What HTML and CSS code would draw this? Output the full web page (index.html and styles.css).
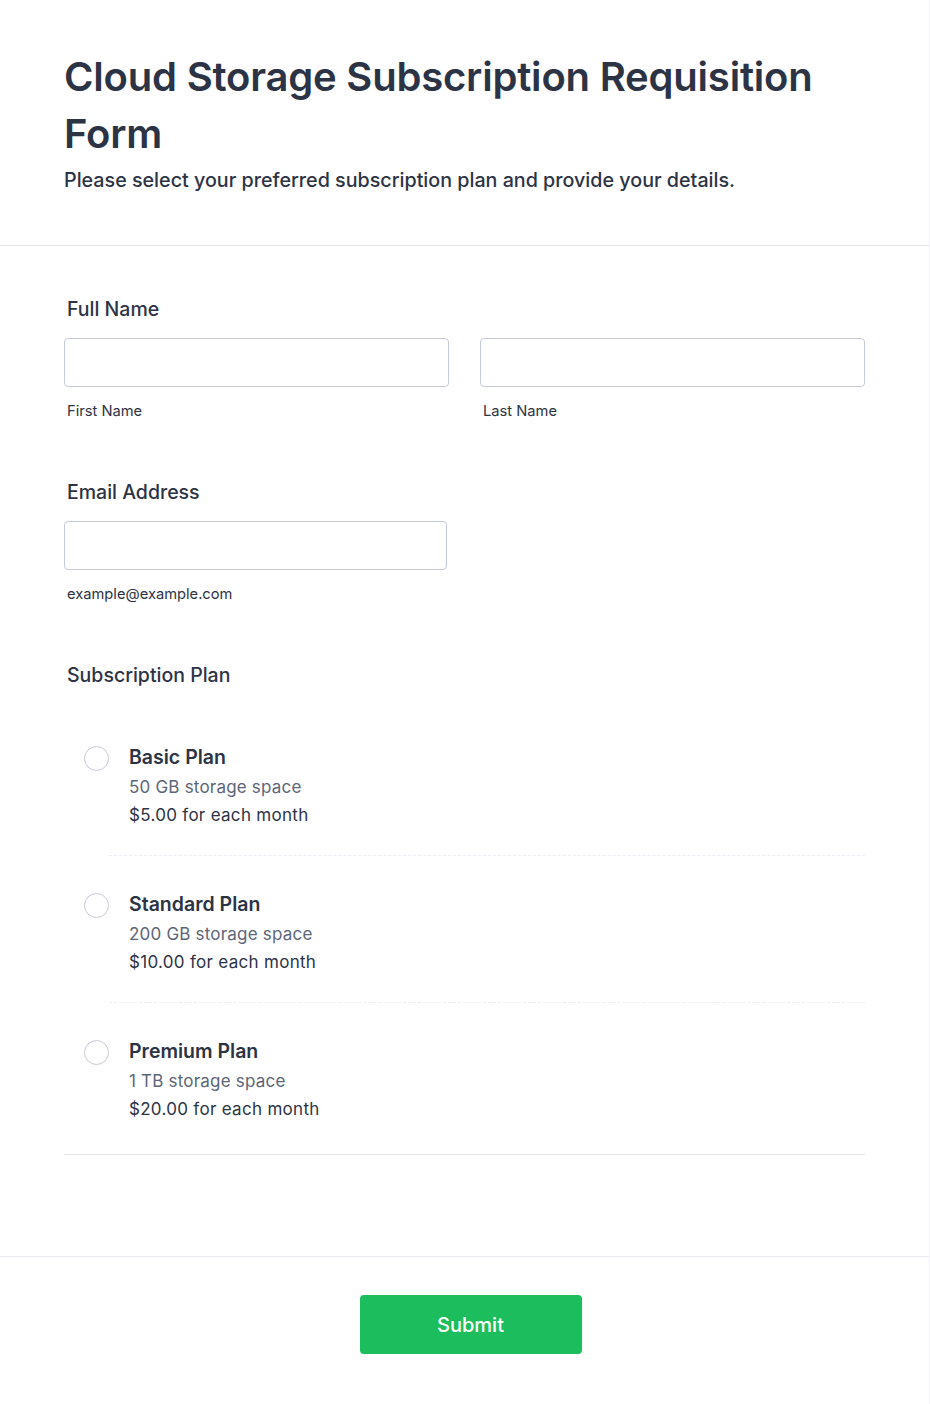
FILE: index.html
```html
<!DOCTYPE html>
<html lang="en">
<head>
<meta charset="utf-8">
<title>Cloud Storage Subscription Requisition Form</title>
<link rel="stylesheet" href="styles.css">
</head>
<body>
<div class="card">
  <header class="header">
    <h1 class="title">Cloud Storage Subscription Requisition Form</h1>
    <p class="subtitle">Please select your preferred subscription plan and provide your details.</p>
  </header>

  <main class="body">
    <section class="field">
      <div class="label">Full Name</div>
      <div class="row">
        <div class="col">
          <div class="input"></div>
          <div class="sublabel">First Name</div>
        </div>
        <div class="col">
          <div class="input"></div>
          <div class="sublabel">Last Name</div>
        </div>
      </div>
    </section>

    <section class="field">
      <div class="label">Email Address</div>
      <div class="col email">
        <div class="input"></div>
        <div class="sublabel">example@example.com</div>
      </div>
    </section>

    <section class="field plans-field">
      <div class="label">Subscription Plan</div>
      <div class="plans">
        <div class="plan">
          <span class="radio"></span>
          <div class="plan-text">
            <div class="plan-name">Basic Plan</div>
            <div class="plan-desc">50 GB storage space</div>
            <div class="plan-price">$5.00 for each month</div>
          </div>
        </div>
        <div class="plan">
          <span class="radio"></span>
          <div class="plan-text">
            <div class="plan-name">Standard Plan</div>
            <div class="plan-desc">200 GB storage space</div>
            <div class="plan-price">$10.00 for each month</div>
          </div>
        </div>
        <div class="plan">
          <span class="radio"></span>
          <div class="plan-text">
            <div class="plan-name">Premium Plan</div>
            <div class="plan-desc">1 TB storage space</div>
            <div class="plan-price">$20.00 for each month</div>
          </div>
        </div>
      </div>
    </section>
  </main>

  <footer class="footer">
    <button class="submit" type="button">Submit</button>
  </footer>
</div>
</body>
</html>
```

FILE: styles.css
```css
* { box-sizing: border-box; }

html, body {
  margin: 0;
  padding: 0;
  background: #ffffff;
}

body {
  font-family: Inter, "Noto Sans", sans-serif;
  color: #2c3345;
}

.card {
  width: 930px;
  min-height: 1404px;
  border-right: 1px solid #f3f3f7;
  background: #fff;
}

.header {
  padding: 48px 64px 53px 64px;
  border-bottom: 1px solid #e3e5ee;
}

.title {
  margin: 0;
  font-size: 40px;
  line-height: 57px;
  font-weight: 600;
  color: #2c3345;
  letter-spacing: -0.2px;
}

.subtitle {
  margin: 6px 0 0 0;
  font-size: 19.7px;
  line-height: 24px;
  font-weight: 500;
  color: #2c3345;
}

.body {
  padding: 51px 64px 0 64px;
}

.field {
  margin-bottom: 60px;
}

.label {
  font-size: 19.5px;
  line-height: 24px;
  font-weight: 500;
  color: #2c3345;
  padding-left: 3px;
  margin-bottom: 17px;
}

.row {
  display: flex;
  gap: 31px;
}

.col {
  flex: 1;
}

.email {
  width: 383px;
  flex: none;
}

.input {
  height: 49px;
  border: 1px solid #c3cad8;
  border-radius: 4px;
  background: #fff;
}

.sublabel {
  margin-top: 15px;
  padding-left: 3px;
  font-size: 14.7px;
  line-height: 18px;
  color: #2c3345;
}

.plans-field {
  margin-bottom: 0;
}

.plans-field .label {
  margin-bottom: 58px;
}

.plans {
  border-bottom: 1px solid #e3e5ee;
  padding-bottom: 34px;
}

.plan {
  display: flex;
  align-items: flex-start;
  padding-left: 20px;
}

.radio {
  width: 25px;
  height: 25px;
  border: 1.5px solid #c7cbd8;
  border-radius: 50%;
  flex: none;
  margin-top: 1px;
}

.plan-text {
  flex: 1;
  padding-left: 20px;
}

.plan:not(:last-child) .plan-text {
  padding-bottom: 29px;
  border-bottom: 1px dashed #eceef3;
  margin-bottom: 36px;
}

.plan-name {
  font-size: 19.5px;
  line-height: 24px;
  font-weight: 600;
  color: #2c3345;
}

.plan-desc {
  margin-top: 7px;
  font-size: 17px;
  line-height: 22px;
  color: #5c6678;
  letter-spacing: 0.2px;
}

.plan-price {
  margin-top: 6px;
  font-size: 17px;
  line-height: 22px;
  color: #2c3345;
  letter-spacing: 0.3px;
}

.footer {
  margin-top: 101px;
  border-top: 1px solid #e8e8f0;
  padding: 38px 0 50px 0;
  display: flex;
  justify-content: center;
}

.submit {
  width: 222px;
  height: 59px;
  margin-left: 12px;
  border: none;
  border-radius: 4px;
  background: #1bbd5c;
  color: #ffffff;
  font-family: Inter, "Noto Sans", sans-serif;
  font-size: 20px;
  font-weight: 500;
}
```
